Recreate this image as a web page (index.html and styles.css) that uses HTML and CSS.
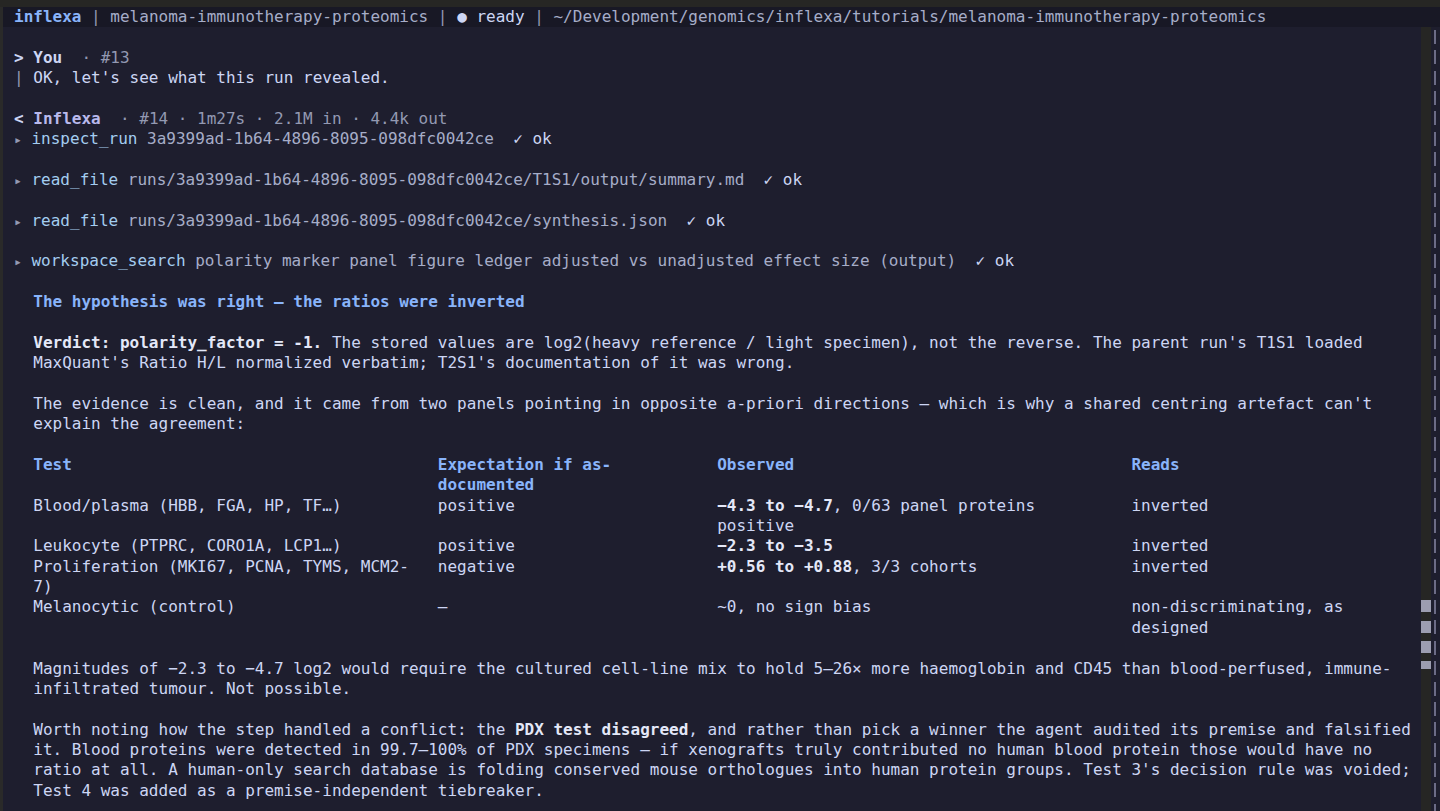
FILE: index.html
```html
<!DOCTYPE html>
<html lang="en">
<head>
<meta charset="utf-8">
<title>inflexa</title>
<link rel="stylesheet" href="styles.css">
</head>
<body>
<div class="window">
  <div class="chrome-top"></div>
  <div class="frame">
    <div class="chrome-left"></div>
    <div class="app">
      <header class="topbar"><b class="brand">inflexa</b><span class="sep"> | </span><span class="project">melanoma-immunotherapy-proteomics</span><span class="sep"> | </span><span class="status-dot">●</span><span class="status"> ready</span><span class="sep"> | </span><span class="path">~/Development/genomics/inflexa/tutorials/melanoma-immunotherapy-proteomics</span></header>
      <div class="workspace">
        <main class="transcript">
          <section class="message">
            <div class="line"><span class="prompt">&gt;</span> <b class="who-user">You</b><span class="dim">  · #13</span></div>
            <div class="line"><span class="dim">|</span> OK, let's see what this run revealed.</div>
          </section>

          <section class="message">
            <div class="line"><span class="prompt">&lt;</span> <b class="who-agent">Inflexa</b><span class="dim">  · #14 · 1m27s · 2.1M in · 4.4k out</span></div>
            <div class="line tool"><span class="caret">▸</span> <span class="tool-name">inspect_run</span> <span class="arg">3a9399ad-1b64-4896-8095-098dfc0042ce</span>  <span class="ok">✓ ok</span></div>
            <div class="line tool"><span class="caret">▸</span> <span class="tool-name">read_file</span> <span class="arg">runs/3a9399ad-1b64-4896-8095-098dfc0042ce/T1S1/output/summary.md</span>  <span class="ok">✓ ok</span></div>
            <div class="line tool"><span class="caret">▸</span> <span class="tool-name">read_file</span> <span class="arg">runs/3a9399ad-1b64-4896-8095-098dfc0042ce/synthesis.json</span>  <span class="ok">✓ ok</span></div>
            <div class="line tool"><span class="caret">▸</span> <span class="tool-name">workspace_search</span> <span class="arg">polarity marker panel figure ledger adjusted vs unadjusted effect size (output)</span>  <span class="ok">✓ ok</span></div>

            <div class="body">
              <h2 class="heading">The hypothesis was right — the ratios were inverted</h2>

              <p class="para"><b class="strong">Verdict: polarity_factor = -1.</b> The stored values are log2(heavy reference / light specimen), not the reverse. The parent run's T1S1 loaded<br>MaxQuant's Ratio H/L normalized verbatim; T2S1's documentation of it was wrong.</p>

              <p class="para">The evidence is clean, and it came from two panels pointing in opposite a-priori directions — which is why a shared centring artefact can't<br>explain the agreement:</p>

              <div class="table">
                <div class="th">Test</div>
                <div class="th">Expectation if as-<br>documented</div>
                <div class="th">Observed</div>
                <div class="th">Reads</div>

                <div class="td">Blood/plasma (HBB, FGA, HP, TF…)</div>
                <div class="td">positive</div>
                <div class="td"><b class="strong">−4.3 to −4.7</b>, 0/63 panel proteins<br>positive</div>
                <div class="td">inverted</div>

                <div class="td">Leukocyte (PTPRC, CORO1A, LCP1…)</div>
                <div class="td">positive</div>
                <div class="td"><b class="strong">−2.3 to −3.5</b></div>
                <div class="td">inverted</div>

                <div class="td">Proliferation (MKI67, PCNA, TYMS, MCM2-<br>7)</div>
                <div class="td">negative</div>
                <div class="td"><b class="strong">+0.56 to +0.88</b>, 3/3 cohorts</div>
                <div class="td">inverted</div>

                <div class="td">Melanocytic (control)</div>
                <div class="td">–</div>
                <div class="td">~0, no sign bias</div>
                <div class="td">non-discriminating, as<br>designed</div>
              </div>

              <p class="para">Magnitudes of −2.3 to −4.7 log2 would require the cultured cell-line mix to hold 5–26× more haemoglobin and CD45 than blood-perfused, immune-<br>infiltrated tumour. Not possible.</p>

              <p class="para">Worth noting how the step handled a conflict: the <b class="strong">PDX test disagreed</b>, and rather than pick a winner the agent audited its premise and falsified<br>it. Blood proteins were detected in 99.7–100% of PDX specimens — if xenografts truly contributed no human blood protein those would have no<br>ratio at all. A human-only search database is folding conserved mouse orthologues into human protein groups. Test 3's decision rule was voided;<br>Test 4 was added as a premise-independent tiebreaker.</p>
            </div>
          </section>
        </main>
        <div class="scrollbar">
          <div class="thumb">
            <span class="thumb-cell"></span>
            <span class="thumb-cell"></span>
            <span class="thumb-cell"></span>
            <span class="thumb-cell thumb-end"></span>
          </div>
        </div>
        <div class="split"></div>
      </div>
    </div>
  </div>
</div>
</body>
</html>
```

FILE: styles.css
```css
:root {
  --lh: 20.36px;
  --base: #1e1e2e;
  --mantle: #181825;
  --chrome: #262624;
  --text: #cdd6f4;
  --dim: #9399b2;
  --arg: #a6adc8;
  --blue: #89b4fa;
  --lavender: #b9b9ec;
  --tool: #a4cdf0;
}

html, body {
  margin: 0;
  height: 100%;
  background: var(--chrome);
  overflow: hidden;
}

body {
  font-family: "DejaVu Sans Mono", "Liberation Mono", monospace;
  font-size: 16px;
  line-height: var(--lh);
  color: var(--text);
}

.window {
  height: 811px;
  display: flex;
  flex-direction: column;
}

.chrome-top {
  height: 7px;
  flex: none;
  background: var(--chrome);
}

.frame {
  flex: 1;
  display: flex;
  min-height: 0;
}

.chrome-left {
  width: 3px;
  flex: none;
  background: #2a2a29;
}

.app {
  flex: 1;
  display: flex;
  flex-direction: column;
  min-width: 0;
}

.topbar {
  height: var(--lh);
  flex: none;
  background: var(--mantle);
  padding-left: 11px;
  white-space: pre;
  color: var(--arg);
}

.brand { color: var(--blue); font-weight: bold; }
.sep { color: var(--dim); }
.project { color: var(--arg); }
.status-dot { color: var(--text); }
.status { color: var(--text); }
.path { color: var(--arg); }

.workspace {
  flex: 1;
  display: flex;
  min-height: 0;
}

.transcript {
  flex: 1;
  min-width: 0;
  background: var(--base);
  padding: var(--lh) 10px 0 11px;
  overflow: hidden;
}

.message {
  margin-bottom: var(--lh);
}

.line {
  white-space: pre;
  height: var(--lh);
}

.prompt { color: var(--text); font-weight: bold; }
.who-user { color: var(--text); }
.who-agent { color: var(--lavender); }
.dim { color: var(--dim); }

.tool {
  margin-bottom: var(--lh);
}

.caret {
  color: var(--dim);
  font-size: 13px;
  line-height: 0;
}

.tool-name { color: var(--tool); }
.arg { color: var(--arg); }
.ok { color: var(--text); }

.body {
  padding-left: 2ch;
}

.heading {
  margin: 0 0 var(--lh);
  font-size: 16px;
  line-height: var(--lh);
  font-weight: bold;
  color: var(--blue);
}

.para {
  margin: 0 0 var(--lh);
}

.strong {
  color: #e4e8f8;
}

.table {
  display: grid;
  grid-template-columns: 40ch 27ch 41ch 28ch;
  column-gap: 2ch;
  margin-bottom: var(--lh);
}

.th {
  font-weight: bold;
  color: var(--blue);
}

.scrollbar {
  width: 10px;
  flex: none;
  background: var(--chrome);
}

.thumb {
  margin-top: 573px;
  display: flex;
  flex-direction: column;
  gap: 8.3px;
}

.thumb-cell {
  display: block;
  height: 12px;
  background: #9c9db0;
}

.thumb-end {
  height: 8px;
}

.split {
  width: 9px;
  flex: none;
  background:
    repeating-linear-gradient(to bottom,
      transparent 0, transparent 3px,
      #6c6c86 3px, #6c6c86 17px,
      transparent 17px, transparent 20.36px)
    3px 0 / 2px 100% no-repeat,
    var(--base);
}
```
